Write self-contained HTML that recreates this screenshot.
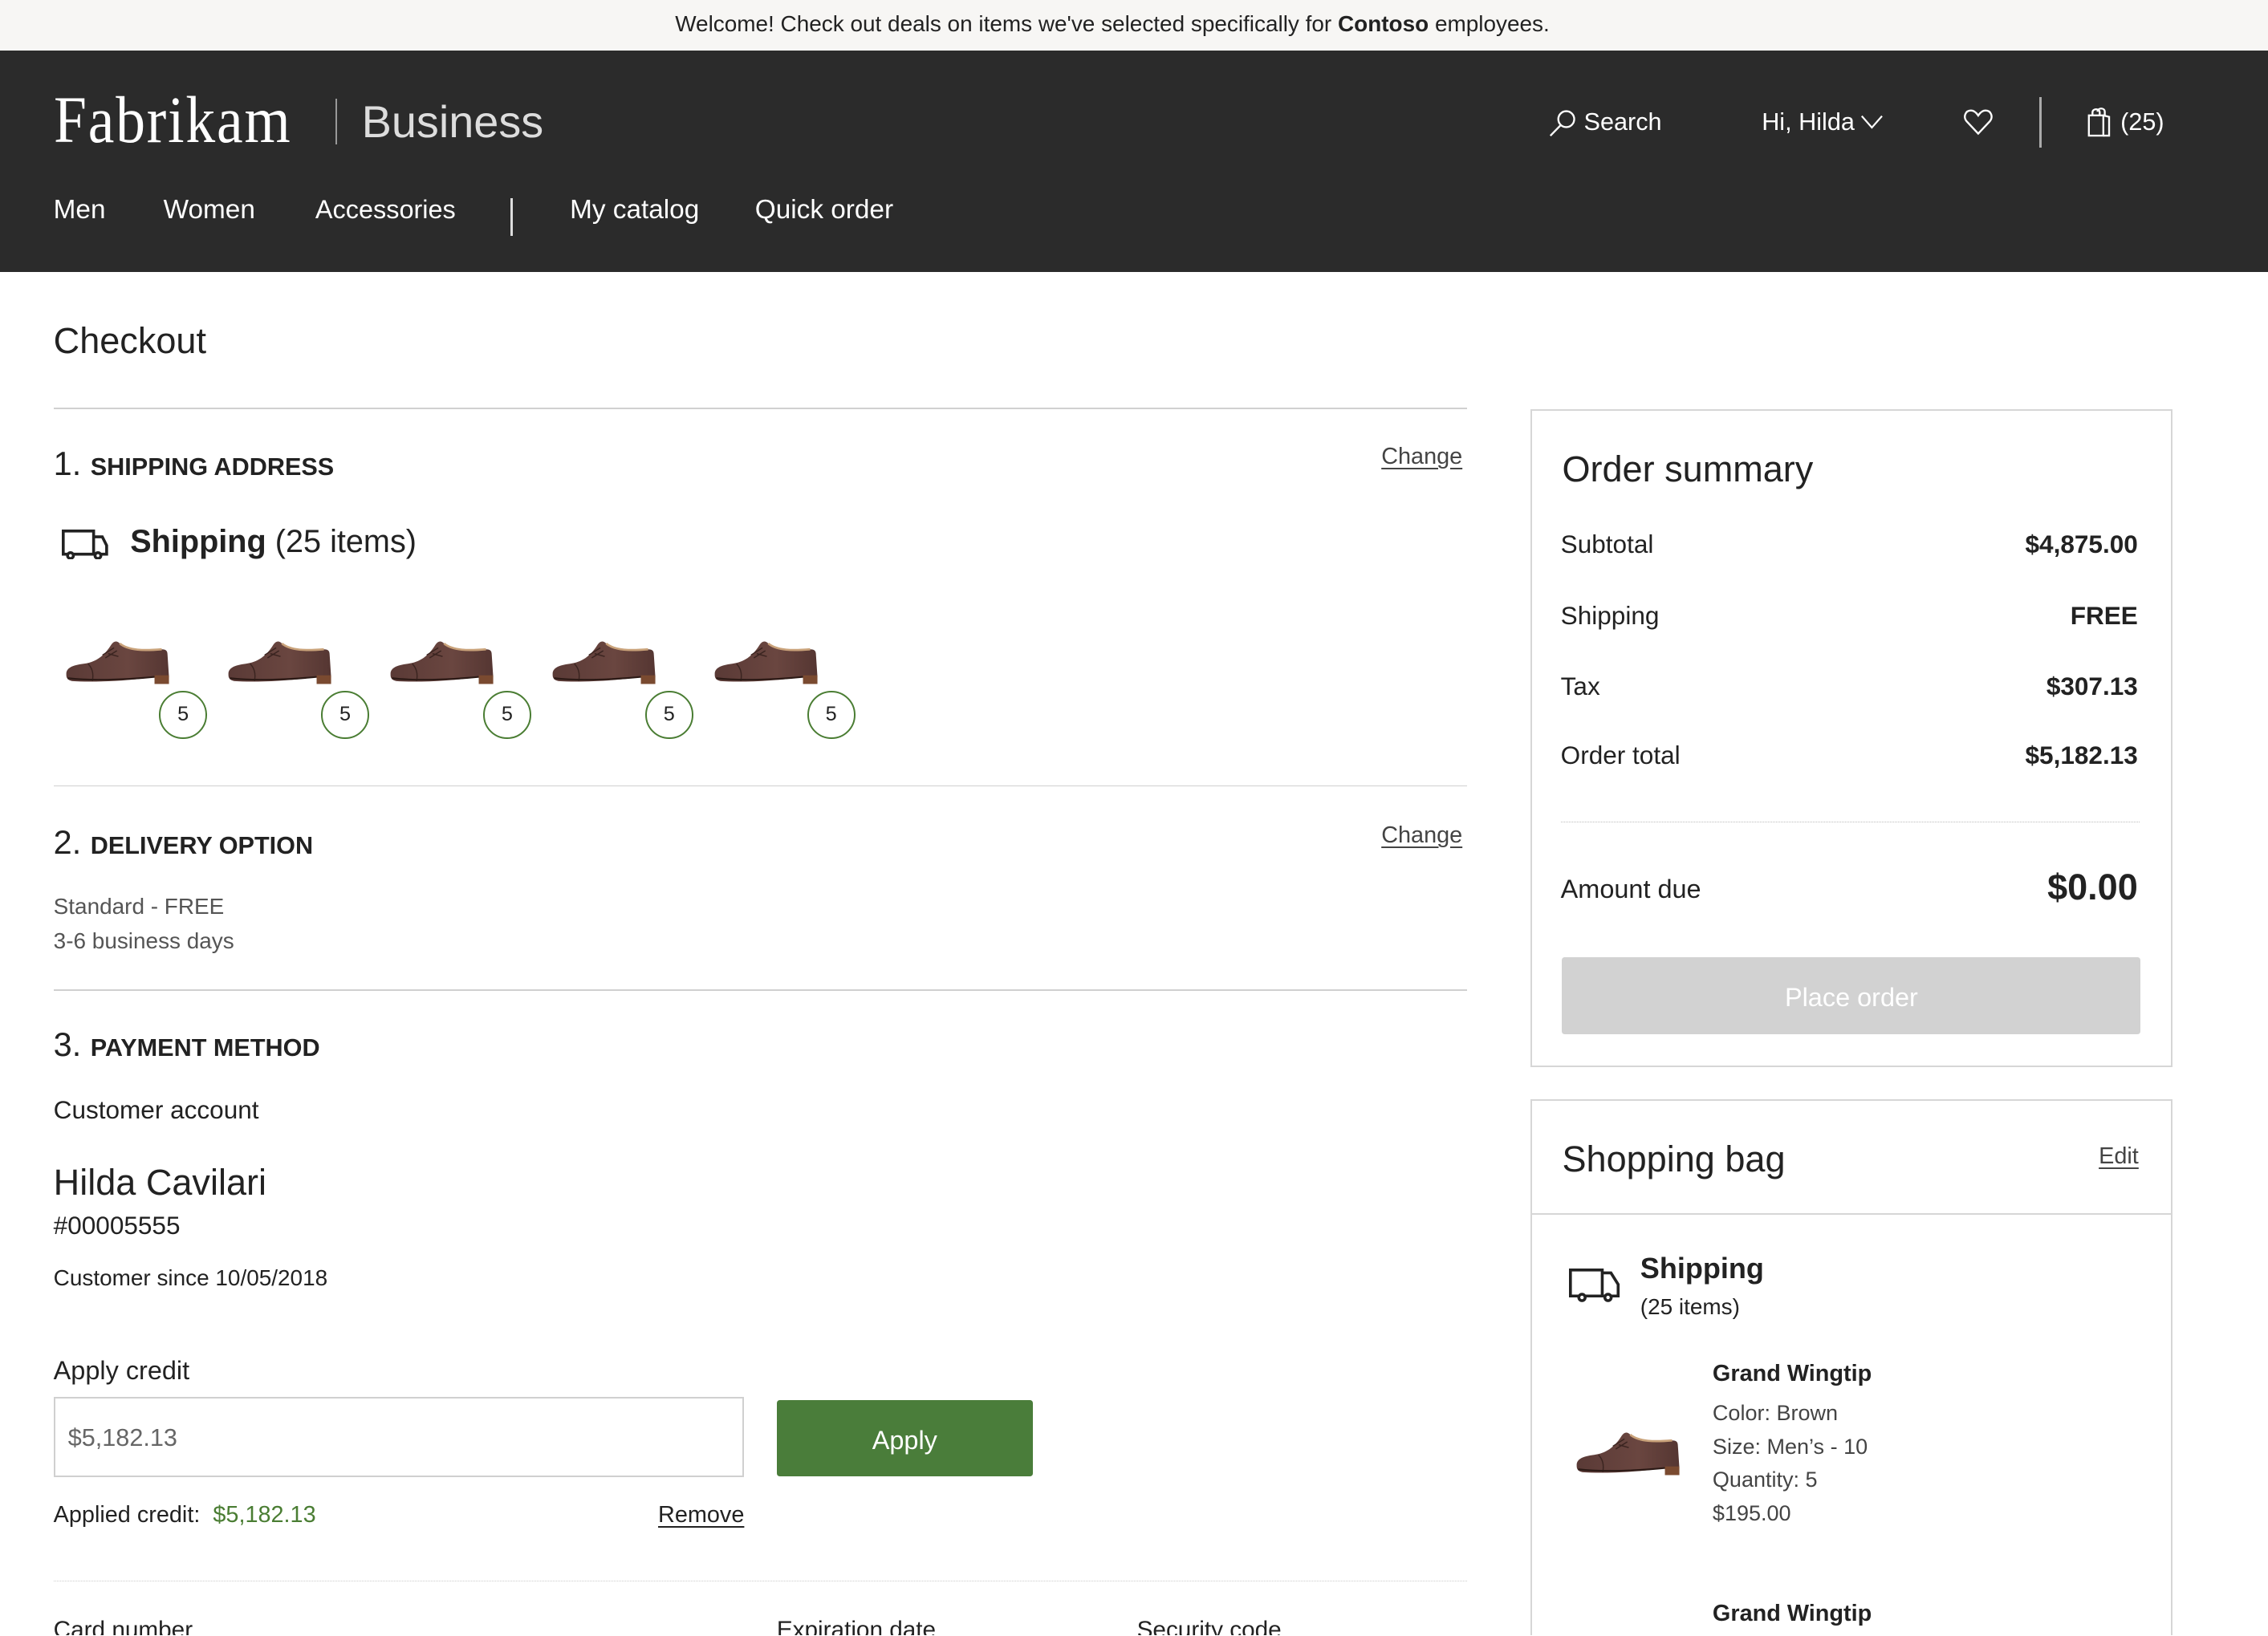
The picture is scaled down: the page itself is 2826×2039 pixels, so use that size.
<!DOCTYPE html>
<html><head><meta charset="utf-8">
<style>
html,body{margin:0;padding:0;}
body{width:2826px;height:2039px;overflow:hidden;background:#fff;}
#w{position:relative;width:1568px;height:1131px;zoom:1.80230;font-family:"Liberation Sans",sans-serif;color:#222;overflow:hidden;}
.a{position:absolute;line-height:1;white-space:nowrap;}
.ln{position:absolute;height:1px;background:#d0d0d0;}
u{text-decoration:underline;text-underline-offset:3px;}
.badge{position:absolute;width:31px;height:31px;border:1.5px solid #4a7d33;border-radius:50%;font-size:14px;text-align:center;line-height:31px;color:#222;}
</style></head><body><div id="w">
<div style="position:absolute;left:0;top:0;width:1568px;height:35px;background:#f7f6f4"></div>
<div class="a" style="left:0;width:1538px;text-align:center;top:9px;font-size:15.5px;color:#222">Welcome! Check out deals on items we've selected specifically for <b>Contoso</b> employees.</div>
<div style="position:absolute;left:0;top:35px;width:1568px;height:153px;background:#2b2b2b"></div>
<div class="a" style="left:37px;top:60px;font-family:'Liberation Serif',serif;font-size:40px;color:#fff;letter-spacing:1px;transform:scale(1.02,1.15);transform-origin:left top">Fabrikam</div>
<div style="position:absolute;left:232px;top:68px;width:1px;height:32px;background:#999"></div>
<div class="a" style="left:250px;top:69px;font-size:31px;color:#ddd">Business</div>
<svg style="position:absolute;left:1071px;top:75px" width="20" height="20" viewBox="0 0 20 20" fill="none" stroke="#fff" stroke-width="1.3"><circle cx="12" cy="7.5" r="5.5"/><path d="M8.3 11.5 L1 19"/></svg>
<div class="a" style="left:1095px;top:76px;font-size:17px;color:#fff">Search</div>
<div class="a" style="left:1218px;top:76px;font-size:17px;color:#fff">Hi, Hilda</div>
<svg style="position:absolute;left:1286px;top:78px" width="16" height="12" viewBox="0 0 16 12" fill="none" stroke="#fff" stroke-width="1.2"><path d="M1 2 L8 10 L15 2"/></svg>
<svg style="position:absolute;left:1357px;top:75px" width="21" height="19" viewBox="0 0 21 19" fill="none" stroke="#fff" stroke-width="1.3"><path d="M10.5 17.5 L2.5 9 C0 6 1.5 1.5 5.5 1.5 C8 1.5 9.5 3.5 10.5 5 C11.5 3.5 13 1.5 15.5 1.5 C19.5 1.5 21 6 18.5 9 Z"/></svg>
<div style="position:absolute;left:1410px;top:67px;width:1.5px;height:35px;background:#aaa"></div>
<svg style="position:absolute;left:1443px;top:74px" width="16" height="21" viewBox="0 0 16 21" fill="none" stroke="#fff" stroke-width="1.3"><rect x="1" y="6" width="10" height="14"/><path d="M11 6 L15 7 L15 20 L11 20"/><path d="M3.5 6 V4 C3.5 1 8.5 1 8.5 4 V6"/><path d="M7 3.5 C7 0.5 12 0.5 12 3.5 V6"/></svg>
<div class="a" style="left:1466px;top:76px;font-size:17px;color:#fff">(25)</div>
<div class="a" style="left:37px;top:136px;font-size:18.5px;color:#fff">Men</div>
<div class="a" style="left:113px;top:136px;font-size:18.5px;color:#fff">Women</div>
<div class="a" style="left:218px;top:136px;font-size:18px;color:#fff">Accessories</div>
<div style="position:absolute;left:353px;top:137px;width:1.5px;height:26px;background:#ddd"></div>
<div class="a" style="left:394px;top:136px;font-size:18.5px;color:#fff">My catalog</div>
<div class="a" style="left:522px;top:136px;font-size:18.5px;color:#fff">Quick order</div>

<div class="a" style="left:37px;top:223px;font-size:25px;color:#222">Checkout</div>
<div class="ln" style="left:37px;top:282px;width:977px"></div>
<div class="a" style="left:37px;top:309px;font-size:23px">1. <b style="font-size:17px">SHIPPING ADDRESS</b></div>
<div class="a" style="left:955px;top:308px;font-size:16px;color:#444"><u>Change</u></div>
<svg style="position:absolute;left:43px;top:366px" width="33" height="21" viewBox="0 0 33 21" fill="none" stroke="#222" stroke-width="2"><path d="M1 1 H22 V17 H1 Z"/><path d="M22 5 H28 L31 11 V17 H22"/><circle cx="6" cy="18" r="2" fill="#fff"/><circle cx="25" cy="18" r="2" fill="#fff"/></svg>
<div class="a" style="left:90px;top:364px;font-size:22px"><b>Shipping</b> (25 items)</div>

<svg width="0" height="0" style="position:absolute"><defs>
<linearGradient id="lg" x1="0" y1="0" x2="1" y2="0"><stop offset="0" stop-color="#5a3a36"/><stop offset="0.6" stop-color="#6a4640"/><stop offset="1" stop-color="#553632"/></linearGradient>
<g id="shoe"><path d="M2 26 C2 22 6 20 14 19 C22 18 28 14 33 6 C35 3 37 3 39 5 C45 10 55 10 68 9 C71 9 72 10 72 13 L73 28 L64 28 C44 31 20 32 6 31 C2 30 2 28 2 26 Z" fill="url(#lg)"/><path d="M39 5 C45 10 56 10 68 9" stroke="#c9a27a" stroke-width="1.5" fill="none"/><path d="M27 13 L35 8 M29 15 L37 10 M31 12 L38 14" stroke="#3a2420" stroke-width="0.8" fill="none"/><path d="M17 19 C20 22 21 26 20 31" stroke="#3a2420" stroke-width="0.8" fill="none"/><path d="M3 29 C20 31 44 30 64 28" stroke="#2c1a16" stroke-width="1.2" fill="none"/><rect x="63" y="27" width="10" height="6" fill="#7a4a30"/></g>
</defs></svg>
<svg style="position:absolute;left:44px;top:440px" width="76" height="34" viewBox="0 0 76 34"><use href="#shoe"/></svg>
<svg style="position:absolute;left:156px;top:440px" width="76" height="34" viewBox="0 0 76 34"><use href="#shoe"/></svg>
<svg style="position:absolute;left:268px;top:440px" width="76" height="34" viewBox="0 0 76 34"><use href="#shoe"/></svg>
<svg style="position:absolute;left:380px;top:440px" width="76" height="34" viewBox="0 0 76 34"><use href="#shoe"/></svg>
<svg style="position:absolute;left:492px;top:440px" width="76" height="34" viewBox="0 0 76 34"><use href="#shoe"/></svg>
<div class="badge" style="left:110px;top:478px">5</div>
<div class="badge" style="left:222px;top:478px">5</div>
<div class="badge" style="left:334px;top:478px">5</div>
<div class="badge" style="left:446px;top:478px">5</div>
<div class="badge" style="left:558px;top:478px">5</div>

<div class="ln" style="left:37px;top:543px;width:977px"></div>
<div class="a" style="left:37px;top:571px;font-size:23px">2. <b style="font-size:17px">DELIVERY OPTION</b></div>
<div class="a" style="left:955px;top:570px;font-size:16px;color:#444"><u>Change</u></div>
<div class="a" style="left:37px;top:619px;font-size:15.5px;color:#555">Standard - FREE</div>
<div class="a" style="left:37px;top:643px;font-size:15.5px;color:#555">3-6 business days</div>
<div class="ln" style="left:37px;top:684px;width:977px"></div>
<div class="a" style="left:37px;top:711px;font-size:23px">3. <b style="font-size:17px">PAYMENT METHOD</b></div>
<div class="a" style="left:37px;top:759px;font-size:17.5px">Customer account</div>
<div class="a" style="left:37px;top:805px;font-size:25px">Hilda Cavilari</div>
<div class="a" style="left:37px;top:839px;font-size:17.5px">#00005555</div>
<div class="a" style="left:37px;top:876px;font-size:15.5px">Customer since 10/05/2018</div>
<div class="a" style="left:37px;top:939px;font-size:18px">Apply credit</div>
<div style="position:absolute;left:37px;top:966px;width:475px;height:53px;border:1.5px solid #d0d0d0"></div>
<div class="a" style="left:47px;top:986px;font-size:17px;color:#666">$5,182.13</div>
<div style="position:absolute;left:537px;top:968px;width:177px;height:53px;background:#4a7d3a;border-radius:2px"></div>
<div class="a" style="left:537px;width:177px;text-align:center;top:987px;font-size:18px;color:#fff">Apply</div>
<div class="a" style="left:37px;top:1040px;font-size:16px">Applied credit:&nbsp; <span style="color:#4a7d33">$5,182.13</span></div>
<div class="a" style="left:455px;top:1040px;font-size:16px"><u>Remove</u></div>
<div style="position:absolute;left:37px;top:1093px;width:977px;border-top:1px dotted #ccc"></div>
<div class="a" style="left:37px;top:1119px;font-size:16.5px">Card number</div>
<div class="a" style="left:537px;top:1119px;font-size:16.5px">Expiration date</div>
<div class="a" style="left:786px;top:1119px;font-size:16.5px">Security code</div>

<div style="position:absolute;left:1058px;top:283px;width:442px;height:453px;border:1.5px solid #d6d6d6"></div>
<div class="a" style="left:1080px;top:312px;font-size:25px">Order summary</div>
<div class="a" style="left:1079px;top:368px;font-size:17.5px">Subtotal</div>
<div class="a" style="right:90px;top:368px;font-size:17.5px;font-weight:bold">$4,875.00</div>
<div class="a" style="left:1079px;top:417px;font-size:17.5px">Shipping</div>
<div class="a" style="right:90px;top:417px;font-size:17.5px;font-weight:bold">FREE</div>
<div class="a" style="left:1079px;top:466px;font-size:17.5px">Tax</div>
<div class="a" style="right:90px;top:466px;font-size:17.5px;font-weight:bold">$307.13</div>
<div class="a" style="left:1079px;top:514px;font-size:17.5px">Order total</div>
<div class="a" style="right:90px;top:514px;font-size:17.5px;font-weight:bold">$5,182.13</div>
<div style="position:absolute;left:1079px;top:568px;width:400px;border-top:1px dotted #bbb"></div>
<div class="a" style="left:1079px;top:606px;font-size:18px">Amount due</div>
<div class="a" style="right:90px;top:601px;font-size:25px;font-weight:bold">$0.00</div>
<div style="position:absolute;left:1080px;top:662px;width:400px;height:53px;background:#d2d2d2;border-radius:2px"></div>
<div class="a" style="left:1080px;width:400px;text-align:center;top:681px;font-size:18px;color:#fff">Place order</div>

<div style="position:absolute;left:1058px;top:760px;width:442px;height:400px;border:1.5px solid #d6d6d6"></div>
<div class="ln" style="left:1059px;top:839px;width:442px;background:#d6d6d6"></div>
<div class="a" style="left:1080px;top:789px;font-size:25px">Shopping bag</div>
<div class="a" style="left:1451px;top:792px;font-size:16px;color:#444"><u>Edit</u></div>
<svg style="position:absolute;left:1085px;top:877px" width="36" height="24" viewBox="0 0 36 24" fill="none" stroke="#222" stroke-width="2"><path d="M1 1 H23 V19 H1 Z"/><path d="M23 3 H29 L34 11 V19 H23"/><circle cx="9" cy="20" r="2.2" fill="#fff"/><circle cx="27" cy="20" r="2.2" fill="#fff"/></svg>
<div class="a" style="left:1134px;top:867px;font-size:20px;font-weight:bold">Shipping</div>
<div class="a" style="left:1134px;top:896px;font-size:15.5px">(25 items)</div>
<svg style="position:absolute;left:1088px;top:987px" width="76" height="34" viewBox="0 0 76 34"><use href="#shoe"/></svg>
<div class="a" style="left:1184px;top:942px;font-size:16px;font-weight:bold">Grand Wingtip</div>
<div class="a" style="left:1184px;top:970px;font-size:15px;color:#444">Color: Brown</div>
<div class="a" style="left:1184px;top:993px;font-size:15px;color:#444">Size: Men’s - 10</div>
<div class="a" style="left:1184px;top:1016px;font-size:15px;color:#444">Quantity: 5</div>
<div class="a" style="left:1184px;top:1039px;font-size:15px;color:#444">$195.00</div>
<div class="a" style="left:1184px;top:1108px;font-size:16px;font-weight:bold">Grand Wingtip</div>
</div></body></html>
